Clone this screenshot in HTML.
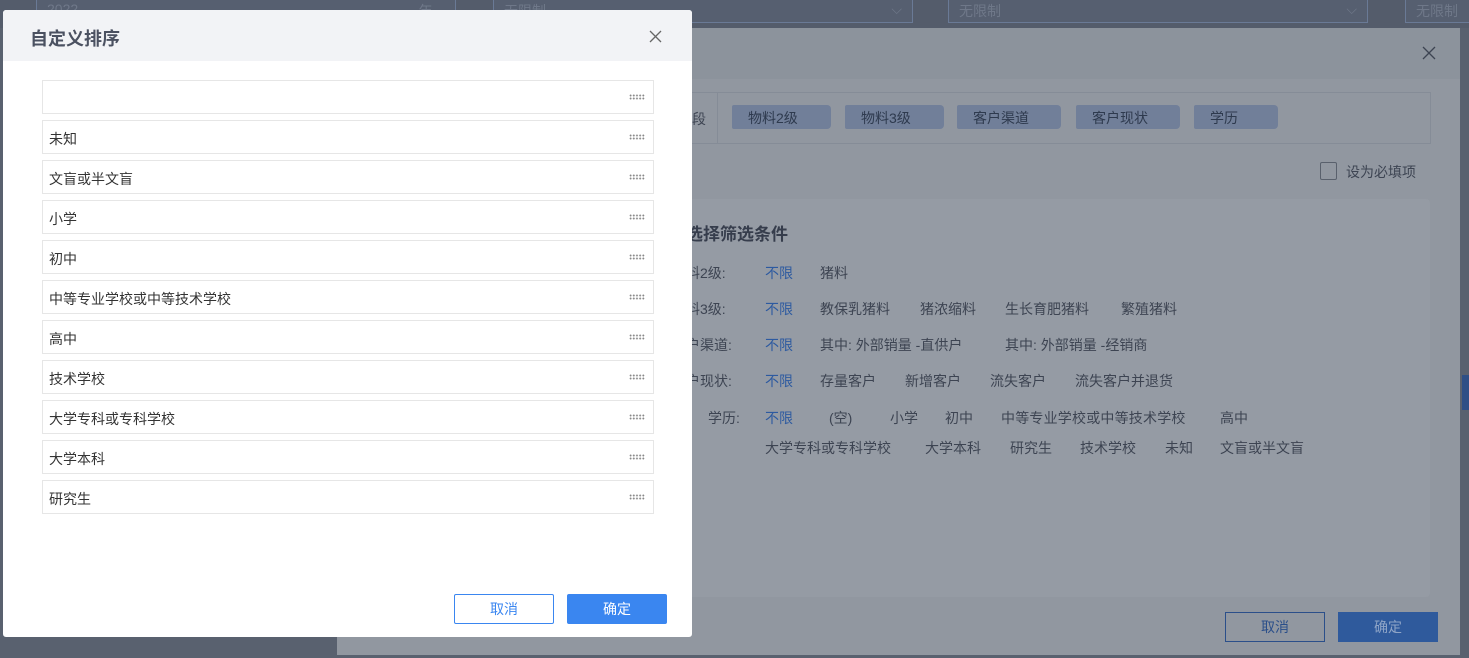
<!DOCTYPE html>
<html><head><meta charset="utf-8"><style>
*{box-sizing:border-box;margin:0;padding:0}
body{width:1469px;height:658px;overflow:hidden;background:#59616f;position:relative;font-family:"Liberation Sans","Noto Sans CJK SC",sans-serif;font-size:14px}
.a{position:absolute}
.top{left:0;top:0;width:1469px;height:28px;background:#545c6b}
.sel{position:absolute;top:-4px;height:27px;border:1px solid #6a7a96;background:#565f70;color:#6f7889;font-size:14px;padding:4px 10px}
.dlg2{left:337px;top:28px;width:1123px;height:627px;background:#9197a0}
.dlg2 .hd{height:51px;background:#8c939c}
.tag{position:absolute;top:105px;height:24px;width:99px;background:#717f99;border-radius:2px 4px 4px 2px;color:#2e3a4e;font-size:14px;padding:3px 16px}
.lbl{position:absolute;color:#3d4452;font-size:14px;white-space:nowrap}
.blue{color:#2d5aa0}
.dlg{left:3px;top:10px;width:689px;height:627px;background:#fff;border-radius:3px}
.dlg .hd{height:51px;background:#f2f3f6;border-radius:3px 3px 0 0;padding:15px 27px;font-size:18px;font-weight:bold;color:#4b5161}
.row{position:absolute;left:39px;width:612px;height:34px;border:1px solid #e6e6e6;padding:8px 6px;color:#333;font-size:14px}
.row i{position:absolute;right:8px;top:13px;width:16px;height:6px;background:radial-gradient(circle,#888 0.8px,transparent 1.1px) 0 0/3.2px 3px}
.btn{position:absolute;width:100px;height:30px;text-align:center;line-height:28px;font-size:14px;border-radius:2px}
</style></head><body>
<div class="a top"></div>
<div class="sel" style="left:36px;width:420px">2022<span style="position:absolute;right:8px">年 ⌵</span></div>
<div class="sel" style="left:493px;width:420px">无限制<span style="position:absolute;right:10px">⌵</span></div>
<div class="sel" style="left:948px;width:420px">无限制<span style="position:absolute;right:10px">⌵</span></div>
<div class="sel" style="left:1405px;width:70px">无限制</div>
<div class="a" style="left:1462px;top:375px;width:7px;height:35px;background:#2f4f86"></div>

<div class="a dlg2"><div class="hd"></div>
<svg class="a" style="right:24px;top:18px" width="14" height="14"><path d="M1 1L13 13M13 1L1 13" stroke="#3d4452" stroke-width="1.3"/></svg>
<div class="a" style="left:0;top:64px;width:1094px;height:52px;border:1px solid #858c97"></div>
<div class="a" style="left:380px;top:64px;width:1px;height:52px;background:#858c97"></div>
<div class="a" style="left:350px;top:171px;width:743px;height:398px;background:#959ba4;border-radius:4px"></div>
<div class="a" style="left:888px;top:584px;width:100px;height:30px;border:1px solid #2b4f8a;color:#2b4f8a;text-align:center;line-height:28px">取消</div>
<div class="a" style="left:1001px;top:584px;width:100px;height:30px;background:#2f5a9c;color:#8fa5c7;text-align:center;line-height:30px">确定</div>
</div>
<div class="lbl" style="left:692px;top:109px">段</div>
<div class="tag" style="left:732px">物料2级</div>
<div class="tag" style="left:845px">物料3级</div>
<div class="tag" style="left:957px;width:104px">客户渠道</div>
<div class="tag" style="left:1076px;width:104px">客户现状</div>
<div class="tag" style="left:1194px;width:84px">学历</div>
<div class="a" style="left:1320px;top:162px;width:17px;height:18px;border:1px solid #59606c;border-radius:2px"></div>
<div class="lbl" style="left:1346px;top:162px">设为必填项</div>
<div class="lbl" style="left:686px;top:220px;font-size:17px;font-weight:bold;color:#363d4c">选择筛选条件</div>

<div class="lbl" style="left:686px;top:263px">料2级:</div>
<div class="lbl blue" style="left:765px;top:263px">不限</div>
<div class="lbl" style="left:820px;top:263px">猪料</div>

<div class="lbl" style="left:686px;top:299px">料3级:</div>
<div class="lbl blue" style="left:765px;top:299px">不限</div>
<div class="lbl" style="left:820px;top:299px">教保乳猪料</div>
<div class="lbl" style="left:920px;top:299px">猪浓缩料</div>
<div class="lbl" style="left:1005px;top:299px">生长育肥猪料</div>
<div class="lbl" style="left:1121px;top:299px">繁殖猪料</div>

<div class="lbl" style="left:686px;top:335px">户渠道:</div>
<div class="lbl blue" style="left:765px;top:335px">不限</div>
<div class="lbl" style="left:820px;top:335px">其中: 外部销量 -直供户</div>
<div class="lbl" style="left:1005px;top:335px">其中: 外部销量 -经销商</div>

<div class="lbl" style="left:686px;top:371px">户现状:</div>
<div class="lbl blue" style="left:765px;top:371px">不限</div>
<div class="lbl" style="left:820px;top:371px">存量客户</div>
<div class="lbl" style="left:905px;top:371px">新增客户</div>
<div class="lbl" style="left:990px;top:371px">流失客户</div>
<div class="lbl" style="left:1075px;top:371px">流失客户并退货</div>

<div class="lbl" style="left:708px;top:408px">学历:</div>
<div class="lbl blue" style="left:765px;top:408px">不限</div>
<div class="lbl" style="left:829px;top:408px">(空)</div>
<div class="lbl" style="left:890px;top:408px">小学</div>
<div class="lbl" style="left:945px;top:408px">初中</div>
<div class="lbl" style="left:1001px;top:408px;letter-spacing:0.2px">中等专业学校或中等技术学校</div>
<div class="lbl" style="left:1220px;top:408px">高中</div>
<div class="lbl" style="left:765px;top:438px">大学专科或专科学校</div>
<div class="lbl" style="left:925px;top:438px">大学本科</div>
<div class="lbl" style="left:1010px;top:438px">研究生</div>
<div class="lbl" style="left:1080px;top:438px">技术学校</div>
<div class="lbl" style="left:1165px;top:438px">未知</div>
<div class="lbl" style="left:1220px;top:438px">文盲或半文盲</div>

<div class="a dlg">
<div class="hd">自定义排序</div>
<svg class="a" style="right:30px;top:20px" width="13" height="13"><path d="M1 1L12 12M12 1L1 12" stroke="#666" stroke-width="1.3"/></svg>
<div class="row" style="top:70px"><i></i></div>
<div class="row" style="top:110px">未知<i></i></div>
<div class="row" style="top:150px">文盲或半文盲<i></i></div>
<div class="row" style="top:190px">小学<i></i></div>
<div class="row" style="top:230px">初中<i></i></div>
<div class="row" style="top:270px">中等专业学校或中等技术学校<i></i></div>
<div class="row" style="top:310px">高中<i></i></div>
<div class="row" style="top:350px">技术学校<i></i></div>
<div class="row" style="top:390px">大学专科或专科学校<i></i></div>
<div class="row" style="top:430px">大学本科<i></i></div>
<div class="row" style="top:470px">研究生<i></i></div>
<div class="btn" style="left:451px;top:584px;border:1px solid #3a86f0;color:#3a86f0">取消</div>
<div class="btn" style="left:564px;top:584px;background:#3a86f0;color:#fff;line-height:30px">确定</div>
</div>
</body></html>
